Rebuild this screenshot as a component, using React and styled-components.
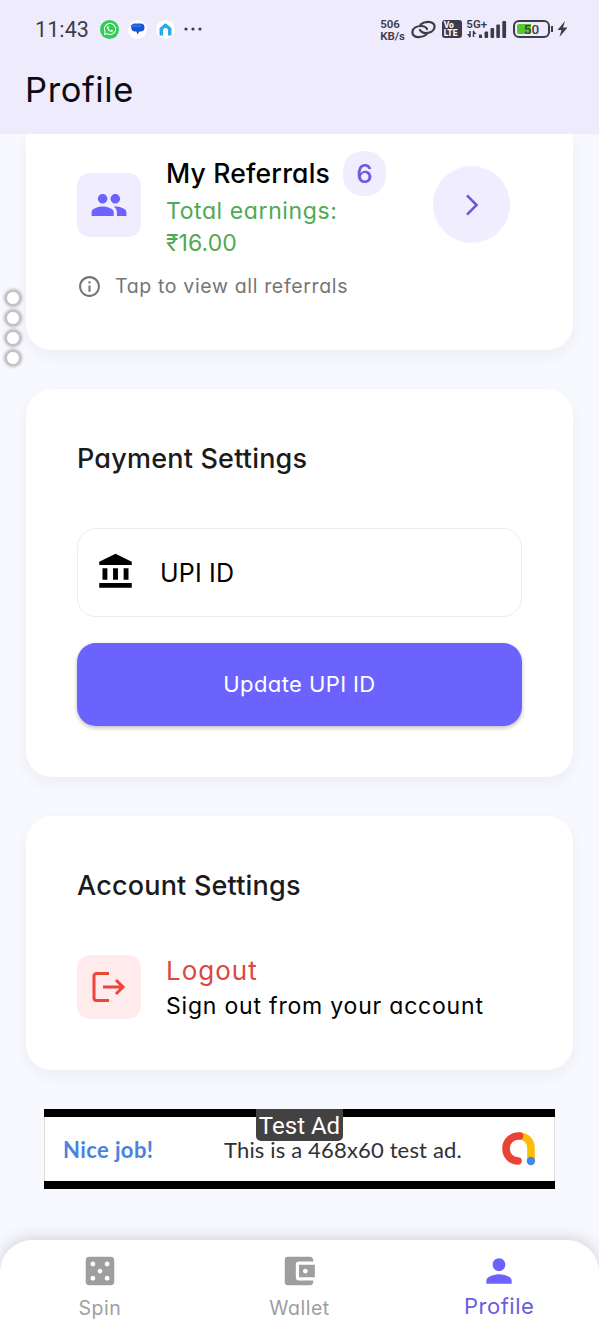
import React from 'react';
import styled, { createGlobalStyle } from 'styled-components';
import { FaWhatsapp } from 'react-icons/fa';
import {
  MdAccountBalance,
  MdAccountBalanceWallet,
  MdCasino,
  MdInfoOutline,
  MdPeople,
  MdPerson,
} from 'react-icons/md';

const GlobalStyle = createGlobalStyle`
  * {
    box-sizing: border-box;
  }
  body {
    margin: 0;
    background: #f8f9ff;
    font-family: Inter, 'Noto Sans', sans-serif;
    font-weight: 380;
    font-feature-settings: 'cv11';
  }
`;

const Screen = styled.div`
  position: relative;
  display: flex;
  flex-direction: column;
  width: 599px;
  height: 1333px;
  overflow: hidden;
  background: #f8f9ff;
`;

const Header = styled.header`
  position: relative;
  z-index: 1;
  flex: none;
  height: 134px;
  background: #eeebfd;
`;

const StatusBar = styled.div`
  display: flex;
  justify-content: space-between;
  align-items: center;
  height: 58px;
  padding: 0 31px 0 35px;
  color: #3d3b49;
  font-family: Roboto, sans-serif;
`;

const StatusGroup = styled.div`
  display: flex;
  align-items: center;
  gap: ${props => props.$gap}px;
`;

const Clock = styled.span`
  font-size: 21.5px;
  font-weight: 400;
  letter-spacing: 0.1px;
  margin-right: 2px;
`;

const AppBadge = styled.span`
  display: flex;
  align-items: center;
  justify-content: center;
  width: 19px;
  height: 19px;
  border-radius: 50%;
  color: #fff;
  background: ${props => props.$color || '#fff'};
`;

const Speed = styled.div`
  width: 25px;
  padding-top: 3px;
  font-size: 11.5px;
  font-weight: 600;
  line-height: 11.5px;
  letter-spacing: -0.1px;
  white-space: nowrap;
`;

const Volte = styled.div`
  width: 20px;
  height: 18px;
  padding: 2px 0 0 2px;
  border-radius: 3px;
  background: #3d3b49;
  color: #fff;
  font-size: 8.5px;
  font-weight: 800;
  line-height: 7.5px;
`;

const Network = styled.div`
  position: relative;
  width: 40px;
  height: 22px;
`;

const NetworkLabel = styled.span`
  position: absolute;
  left: -1px;
  top: 1px;
  font-size: 11.5px;
  font-weight: 600;
  line-height: 10px;
`;

const Battery = styled.div`
  position: relative;
  width: 37px;
  height: 18px;
  border: 2px solid #3d3b49;
  border-radius: 6px;
  padding: 2px;
  &::after {
    content: '';
    position: absolute;
    right: -5px;
    top: 4px;
    width: 2px;
    height: 6px;
    background: #3d3b49;
  }
`;

const Charge = styled.div`
  width: 14px;
  height: 10px;
  border-radius: 2px 0 0 2px;
  background: #5cc72c;
`;

const ChargeText = styled.span`
  position: absolute;
  left: 0;
  right: 0;
  top: 0;
  text-align: center;
  font-size: 13.5px;
  font-weight: 500;
  line-height: 14px;
`;

const PageTitle = styled.h1`
  margin: 0;
  padding-left: 25px;
  font-size: 34.5px;
  font-weight: 380;
  line-height: 64px;
  letter-spacing: 0.6px;
  color: #0b0a10;
`;

const Content = styled.main`
  flex: 1;
  padding: 0 26px;
`;

const Card = styled.section`
  padding: 0 51px;
  margin-bottom: 39px;
  height: ${props => props.$height}px;
  border-radius: ${props => (props.$clipped ? '0 0 26px 26px' : '26px')};
  background: #fff;
  box-shadow: 0 6px 16px rgba(30, 30, 60, 0.05);
`;

const Row = styled.div`
  display: flex;
  align-items: ${props => props.$align || 'center'};
`;

const IconTile = styled.div`
  display: flex;
  align-items: center;
  justify-content: center;
  flex: none;
  width: 64px;
  height: 64px;
  margin-top: ${props => props.$offset || 0}px;
  margin-right: 25px;
  border-radius: 13px;
  color: ${props => props.$color};
  background: ${props => props.$background};
`;

const ReferralInfo = styled.div`
  width: 267px;
  padding-top: 16px;
`;

const ReferralTitle = styled.div`
  display: flex;
  align-items: center;
  height: 46px;
  font-size: 26.5px;
  font-weight: 500;
  letter-spacing: 0.2px;
  white-space: nowrap;
  color: #000;
`;

const Count = styled.span`
  display: flex;
  align-items: center;
  justify-content: center;
  width: 43px;
  height: 45px;
  margin-left: 13px;
  border-radius: 20px;
  font-size: 26px;
  color: #7059dc;
  background: #f0eefe;
`;

const Earnings = styled.div`
  font-size: 23px;
  line-height: 31.5px;
  letter-spacing: ${props => props.$spacing}px;
  color: #4fa955;
`;

const RoundButton = styled.button`
  display: flex;
  align-items: center;
  justify-content: center;
  flex: none;
  width: 77px;
  height: 77px;
  margin: 32px 0 0;
  padding: 0;
  border: 0;
  border-radius: 50%;
  color: #6d57d8;
  background: #f0eefe;
`;

const Hint = styled.div`
  display: flex;
  align-items: center;
  gap: 13px;
  padding: 13px 0 0;
  font-size: 19.5px;
  line-height: 28px;
  letter-spacing: 0.65px;
  color: #757575;
`;

const SectionTitle = styled.h2`
  margin: 0;
  padding-top: 50px;
  font-size: 27px;
  font-weight: 500;
  line-height: 39px;
  letter-spacing: 0.2px;
  color: #1b1b1e;
`;

const Field = styled.div`
  display: flex;
  align-items: center;
  gap: 25px;
  height: 89px;
  margin-top: 50px;
  padding: 1px 18px 0;
  border: 1.5px solid #ededed;
  border-radius: 19px;
  font-size: 25px;
  letter-spacing: 0.2px;
  color: #000;

  svg {
    margin-top: -3px;
  }
`;

const PrimaryButton = styled.button`
  display: block;
  width: 100%;
  height: 83px;
  margin-top: 26px;
  padding: 0 0 1px;
  border: 0;
  border-radius: 19px;
  font-family: inherit;
  font-weight: inherit;
  font-feature-settings: inherit;
  font-size: 22px;
  letter-spacing: 0.4px;
  color: #fff;
  background: #6c63ff;
  box-shadow: 0 2px 4px rgba(0, 0, 0, 0.25);
`;

const LogoutRow = styled(Row)`
  margin-top: 47px;
`;

const LogoutTitle = styled.div`
  font-size: 26px;
  line-height: 38px;
  letter-spacing: 1px;
  color: #db4840;
`;

const LogoutText = styled.div`
  font-size: 23px;
  line-height: 32px;
  letter-spacing: 0.8px;
  white-space: nowrap;
  color: #000;
`;

const Ad = styled.div`
  position: relative;
  display: flex;
  align-items: center;
  width: 511px;
  height: 80px;
  margin: 0 18px;
  padding: 0 19px 0 19px;
  border-top: 8px solid #000;
  border-bottom: 8px solid #000;
  background: #fefefe;
  box-shadow: inset 1px 0 #ddd, inset -1px 0 #ddd;
  font-family: Lato, sans-serif;
  font-size: 22px;
  font-weight: 400;
`;

const AdHeadline = styled.span`
  width: 161px;
  font-weight: 700;
  letter-spacing: 0.4px;
  color: #4a83dd;
`;

const AdText = styled.span`
  flex: 1;
  letter-spacing: 0.16px;
  white-space: nowrap;
  color: #303134;
`;

const AdLabel = styled.span`
  position: absolute;
  left: 212px;
  top: -8px;
  width: 87px;
  height: 32px;
  border-radius: 0 0 5px 5px;
  text-align: center;
  font-family: Roboto, sans-serif;
  font-size: 24px;
  line-height: 35px;
  color: #fff;
  background: #424242;
`;

const EdgeHandle = styled.div`
  position: absolute;
  left: 6px;
  top: 291px;
  display: flex;
  flex-direction: column;
  gap: 6px;
`;

const Dot = styled.span`
  width: 14px;
  height: 14px;
  border: 1px solid #c4c4c6;
  border-radius: 50%;
  background: #fff;
  box-shadow: 0 0 3px 2px rgba(0, 0, 0, 0.28);
`;

const BottomNav = styled.nav`
  display: grid;
  grid-template-columns: repeat(3, 1fr);
  flex: none;
  height: 93px;
  border-radius: 32px 32px 0 0;
  background: #fff;
  box-shadow: 0 -2px 16px rgba(0, 0, 0, 0.16);
`;

const NavItem = styled.div`
  display: flex;
  flex-direction: column;
  align-items: center;
  padding-top: 12px;
  font-size: ${props => (props.$active ? '22px' : '19.5px')};
  line-height: ${props => (props.$active ? '32px' : '37px')};
  letter-spacing: 0.5px;
  color: ${props => (props.$active ? '#6c5ce0' : '#9e9e9e')};

  svg {
    flex: none;
    color: ${props => (props.$active ? '#6c63ff' : '#9e9e9e')};
  }
`;

const MessageIcon = () => (
  <svg width="15" height="14" viewBox="0 0 15 14">
    <path d="M5 1.500h5.500a4 4 0 0 1 0 8H9.500L7.300 12.500 6.500 9.500H5.500A4 4 0 0 1 5 1.500z" fill="#1655d0" />
    <path d="M2 4h8" stroke="#2f70e2" strokeWidth="2.500" strokeLinecap="round" />
  </svg>
);

const HomeIcon = () => (
  <svg width="13" height="13" viewBox="0 0 13 13">
    <path d="M.5 5.300 5.500.8q1-.7 2 0l5 4.500v7.200H9V7.500a2.500 2.500 0 0 0-5 0v5H.5z" fill="#2fa9e6" />
  </svg>
);

const MoreIcon = () => (
  <svg width="18" height="4" viewBox="0 0 18 4" fill="currentColor">
    <circle cx="2" cy="2" r="1.600" />
    <circle cx="9" cy="2" r="1.600" />
    <circle cx="16" cy="2" r="1.600" />
  </svg>
);

// two open loops, each the other turned by half a circle
const LinkIcon = () => (
  <svg width="25" height="19" viewBox="0 0 25 19" fill="none" stroke="currentColor" strokeWidth="2.200" strokeLinecap="round">
    <path d="M9.500 4.500C11.500 2.800 14 1.800 17 1.800c4.500 0 7 2.300 6.500 5.600-.5 3.800-4.500 5.600-8.500 5.600-3 0-5-1-6-3" />
    <path d="M15.500 14.500c-2 1.700-4.500 2.700-7.500 2.700-4.500 0-7-2.300-6.500-5.600C2 7.800 6 6 10 6c3 0 5 1 6 3" />
  </svg>
);

const SignalIcon = () => (
  <svg width="40" height="22" viewBox="0 0 40 22" fill="currentColor">
    <path d="M3 13v6M6.500 13v6" stroke="currentColor" strokeWidth="1.500" />
    <path d="M0 16h3v4zM6 12l3.500 4H6z" />
    <rect x="12" y="16.500" width="3" height="3.500" rx="0.500" />
    <rect x="17.500" y="13.500" width="3.600" height="6.500" rx="1" />
    <rect x="23.500" y="10" width="3.600" height="10" rx="1" />
    <rect x="29.300" y="6.500" width="3.600" height="13.500" rx="1" />
    <rect x="35.300" y="3" width="3.800" height="17" rx="1" />
  </svg>
);

const BoltIcon = () => (
  <svg width="11" height="16" viewBox="0 0 11 16">
    <path d="M8 0 .5 9h4L2.500 16l8-9.500H6z" fill="currentColor" />
  </svg>
);

const ChevronIcon = () => (
  <svg width="14" height="24" viewBox="0 0 14 24" fill="none" stroke="currentColor" strokeWidth="2.500">
    <path d="m2 2.300 9.600 9.700L2 21.700" />
  </svg>
);

const LogoutIcon = () => (
  <svg width="36" height="32" viewBox="0 0 36 32" fill="none" stroke="currentColor" strokeWidth="3">
    <path d="M18 2.500H5.500A2.500 2.500 0 0 0 3 5v22a2.500 2.500 0 0 0 2.500 2.500H18" />
    <path d="M12 16h20M25 9l7 7-7 7" />
  </svg>
);

const AdMobLogo = () => (
  <svg width="34" height="34" viewBox="0 0 34 34" fill="none" strokeWidth="7.600">
    <path d="M17 4c7 0 12 5 12 12.500V28" stroke="#fbbc04" />
    <path d="M17.500 4A12.500 12.500 0 0 0 4 16.500C4 23.500 9 28.800 16 29" stroke="#ea4335" strokeLinecap="round" />
    <circle cx="28.900" cy="29" r="4.200" fill="#4285f4" />
  </svg>
);

const App = () => {
  return (
    <>
      <GlobalStyle />
      <Screen>
        <Header>
          <StatusBar>
            <StatusGroup $gap={9}>
              <Clock>11:43</Clock>
              <AppBadge $color="#35cb59">
                <FaWhatsapp size={14} />
              </AppBadge>
              <AppBadge>
                <MessageIcon />
              </AppBadge>
              <AppBadge>
                <HomeIcon />
              </AppBadge>
              <MoreIcon />
            </StatusGroup>
            <StatusGroup $gap={5.700}>
              <Speed>
                506
                <br />
                KB/s
              </Speed>
              <LinkIcon />
              <Volte>
                Vo
                <br />
                LTE
              </Volte>
              <Network>
                <SignalIcon />
                <NetworkLabel>5G+</NetworkLabel>
              </Network>
              <StatusGroup $gap={7}>
                <Battery>
                  <Charge />
                  <ChargeText>50</ChargeText>
                </Battery>
                <BoltIcon />
              </StatusGroup>
            </StatusGroup>
          </StatusBar>
          <PageTitle>Profile</PageTitle>
        </Header>

        <Content>
          <Card $height={216} $clipped>
            <Row $align="flex-start">
              <IconTile $color="#6c63ff" $background="#f0eefe" $offset={39}>
                <MdPeople size={38} />
              </IconTile>
              <ReferralInfo>
                <ReferralTitle>
                  My Referrals
                  <Count>6</Count>
                </ReferralTitle>
                <Earnings $spacing={0.6}>Total earnings:</Earnings>
                <Earnings $spacing={0.1}>₹16.00</Earnings>
              </ReferralInfo>
              <RoundButton aria-label="View referrals">
                <ChevronIcon />
              </RoundButton>
            </Row>
            <Hint>
              <MdInfoOutline size={25} />
              Tap to view all referrals
            </Hint>
          </Card>

          <Card $height={388}>
            <SectionTitle>Payment Settings</SectionTitle>
            <Field>
              <MdAccountBalance size={39} />
              UPI ID
            </Field>
            <PrimaryButton>Update UPI ID</PrimaryButton>
          </Card>

          <Card $height={254}>
            <SectionTitle>Account Settings</SectionTitle>
            <LogoutRow>
              <IconTile $color="#ee443a" $background="#ffebeb">
                <LogoutIcon />
              </IconTile>
              <div>
                <LogoutTitle>Logout</LogoutTitle>
                <LogoutText>Sign out from your account</LogoutText>
              </div>
            </LogoutRow>
          </Card>

          <Ad>
            <AdHeadline>Nice job!</AdHeadline>
            <AdText>This is a 468x60 test ad.</AdText>
            <AdMobLogo />
            <AdLabel>Test Ad</AdLabel>
          </Ad>
        </Content>

        <EdgeHandle>
          <Dot />
          <Dot />
          <Dot />
          <Dot />
        </EdgeHandle>

        <BottomNav>
          <NavItem>
            <MdCasino size={38} />
            Spin
          </NavItem>
          <NavItem>
            <MdAccountBalanceWallet size={38} />
            Wallet
          </NavItem>
          <NavItem $active>
            <MdPerson size={38} />
            Profile
          </NavItem>
        </BottomNav>
      </Screen>
    </>
  );
};

export default App;
